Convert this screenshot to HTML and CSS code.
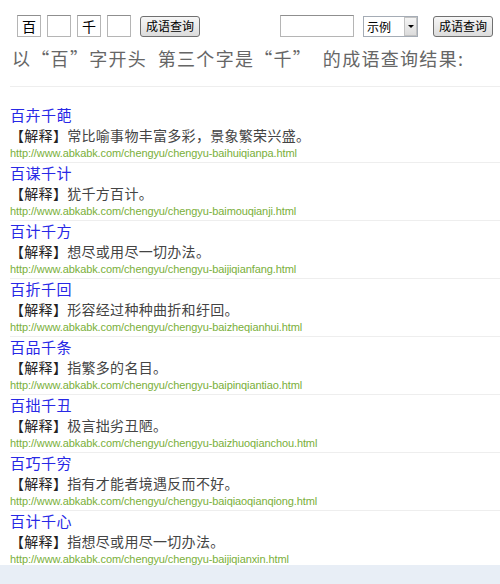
FILE: index.html
```html
<!DOCTYPE html>
<html lang="zh-CN">
<head>
    <meta charset="UTF-8">
    <title>成语查询</title>
    <link rel="stylesheet" href="styles.css">
</head>
<body>
    <div class="page">
        <div class="search-bar">
            <div class="word-form">
                <input class="char-box" type="text" value="百">
                <input class="char-box" type="text" value="">
                <input class="char-box" type="text" value="千">
                <input class="char-box" type="text" value="">
                <button class="button">成语查询</button>
            </div>
            <div class="key-form">
                <input class="key-input" type="text">
                <div class="select-wrap">
                    <select class="mode-select">
                        <option>示例</option>
                    </select>
                    <span class="select-arrow"></span>
                </div>
                <button class="button">成语查询</button>
            </div>
        </div>
        <h1 class="result-title">以“百”字开头&nbsp;&nbsp;第三个字是“千”&nbsp;&nbsp;的成语查询结果:</h1>
        <div class="result-list" id="result-list">
            <!-- results generated below -->
        </div>
    </div>
    <script>
        const results = [
            { name: '百卉千葩', desc: '常比喻事物丰富多彩，景象繁荣兴盛。', slug: 'baihuiqianpa' },
            { name: '百谋千计', desc: '犹千方百计。', slug: 'baimouqianji' },
            { name: '百计千方', desc: '想尽或用尽一切办法。', slug: 'baijiqianfang' },
            { name: '百折千回', desc: '形容经过种种曲折和纡回。', slug: 'baizheqianhui' },
            { name: '百品千条', desc: '指繁多的名目。', slug: 'baipinqiantiao' },
            { name: '百拙千丑', desc: '极言拙劣丑陋。', slug: 'baizhuoqianchou' },
            { name: '百巧千穷', desc: '指有才能者境遇反而不好。', slug: 'baiqiaoqianqiong' },
            { name: '百计千心', desc: '指想尽或用尽一切办法。', slug: 'baijiqianxin' }
        ];

        const list = document.getElementById('result-list');
        results.forEach(item => {
            const url = 'http://www.abkabk.com/chengyu/chengyu-' + item.slug + '.html';
            const div = document.createElement('div');
            div.className = 'result-item';
            div.innerHTML = `
                <a class="item-name" href="#">${item.name}</a>
                <div class="item-desc"><b>【解释】</b>${item.desc}</div>
                <div class="item-url">${url}</div>
            `;
            list.appendChild(div);
        });
    </script>
</body>
</html>
```

FILE: styles.css
```css
body {
    margin: 0;
    padding: 0;
    background-color: #e8eef6;
    font-family: "Noto Sans CJK SC", "Liberation Sans", sans-serif;
}
.page {
    height: 565px;
    overflow: hidden;
    background-color: #fff;
}
.search-bar {
    display: flex;
    justify-content: space-between;
    align-items: center;
    padding: 15px 7px 0 17px;
    height: 22px;
}
.word-form,
.key-form {
    display: flex;
    align-items: center;
}
.char-box {
    box-sizing: border-box;
    width: 24px;
    height: 22px;
    margin: 0 6px 0 0;
    padding: 0;
    border: 1px solid #b5b5b5;
    border-top-color: #8f8f8f;
    text-align: center;
    font-family: "Noto Sans CJK SC", sans-serif;
    font-size: 14px;
    color: #000;
}
.word-form .button {
    margin-left: 3px;
}
.button {
    box-sizing: border-box;
    height: 21px;
    padding: 0 5px;
    background: linear-gradient(#f6f6f6, #dcdcdc);
    border: 1px solid #707070;
    border-radius: 3px;
    font-family: "Noto Sans CJK SC", sans-serif;
    font-size: 12px;
    line-height: 18px;
    color: #000;
}
.key-input {
    box-sizing: border-box;
    width: 74px;
    height: 22px;
    margin: 0 9px 0 0;
    border: 1px solid #b5b5b5;
    border-top-color: #8f8f8f;
    padding: 0 2px;
}
.select-wrap {
    position: relative;
    display: flex;
    margin-right: 15px;
}
.mode-select {
    box-sizing: border-box;
    display: block;
    width: 55px;
    height: 21px;
    margin: 0;
    padding: 0 0 0 3px;
    appearance: none;
    -webkit-appearance: none;
    background: #fff;
    border: 1px solid #a5acb5;
    border-radius: 0;
    font-family: "Noto Sans CJK SC", sans-serif;
    font-size: 12px;
    line-height: 19px;
    color: #000;
}
.select-arrow {
    position: absolute;
    top: 1px;
    right: 1px;
    width: 13px;
    height: 19px;
    box-sizing: border-box;
    border: 1px solid #c3c3c3;
    background: linear-gradient(#f4f4f4, #dcdcdc);
    pointer-events: none;
}
.select-arrow::after {
    content: "";
    position: absolute;
    left: 3px;
    top: 7px;
    border-left: 3px solid transparent;
    border-right: 3px solid transparent;
    border-top: 3px solid #000;
}
.result-title {
    margin: 8px 0 0 12px;
    font-size: 18px;
    font-weight: normal;
    line-height: 26px;
    letter-spacing: 1.3px;
    color: #666;
}
.result-list {
    margin: 15px 0 0 10px;
    padding-top: 18px;
    border-top: 1px solid #eee;
}
.result-item {
    padding-bottom: 2px;
    border-bottom: 1px solid #eee;
}
.item-name {
    display: block;
    font-size: 15px;
    line-height: 20px;
    letter-spacing: 0.5px;
    color: #2828e6;
    text-decoration: none;
}
.item-desc {
    font-size: 14px;
    line-height: 21px;
    letter-spacing: 0.3px;
    color: #444;
}
.item-desc b {
    font-weight: normal;
    color: #222;
}
.item-url {
    font-family: "Liberation Sans", Arial, sans-serif;
    font-size: 11px;
    line-height: 14px;
    letter-spacing: -0.1px;
    color: #7aaf3a;
}
```
